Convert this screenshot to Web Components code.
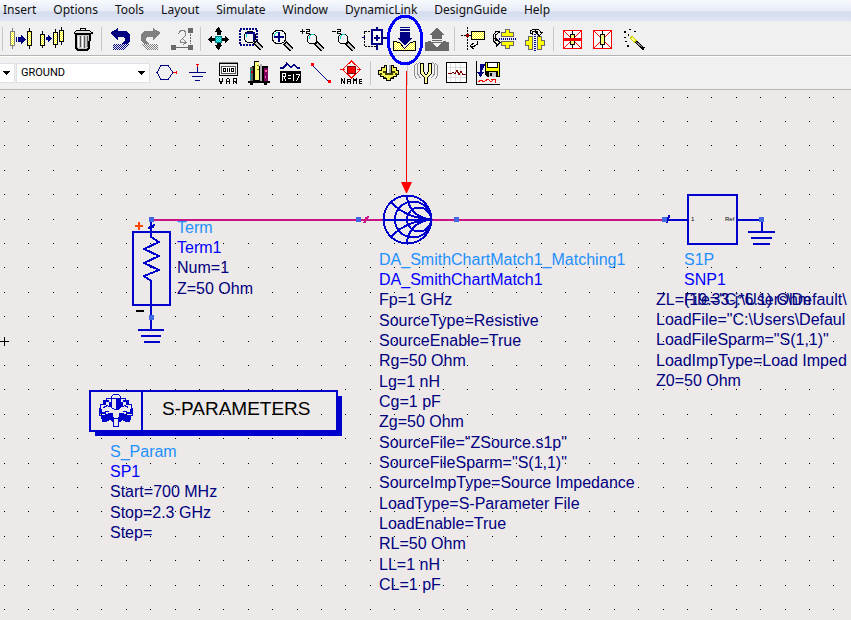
<!DOCTYPE html>
<html lang="en">
<head>
<meta charset="utf-8">
<title>Schematic</title>
<style>
  html, body { margin: 0; height: 100%; overflow: hidden; }
  body { font-family: "Noto Sans", "Open Sans", sans-serif; background: #ede9e8; }
</style>
</head>
<body>
<schematic-app>
  <menu-bar slot="menu">
    <menu-item>Insert</menu-item><menu-item>Options</menu-item><menu-item>Tools</menu-item><menu-item>Layout</menu-item><menu-item>Simulate</menu-item><menu-item>Window</menu-item><menu-item>DynamicLink</menu-item><menu-item>DesignGuide</menu-item><menu-item>Help</menu-item>
  </menu-bar>
  <tool-bar slot="tools">
    <tool-sep></tool-sep>
    <tool-button icon="insertSeries" label="Insert component"></tool-button>
    <tool-button icon="insertMany" label="Repeat component"></tool-button>
    <tool-button icon="trash" label="Delete"></tool-button>
    <tool-sep></tool-sep>
    <tool-button icon="undo" label="Undo"></tool-button>
    <tool-button icon="redo" label="Redo"></tool-button>
    <tool-button icon="endCommand" label="Edit path"></tool-button>
    <tool-sep></tool-sep>
    <tool-button icon="pan" label="View all"></tool-button>
    <tool-button icon="zoomArea" label="Zoom area"></tool-button>
    <tool-button icon="zoomPoint" label="Zoom point"></tool-button>
    <tool-button icon="zoomIn" label="Zoom in by 2"></tool-button>
    <tool-button icon="zoomOut" label="Zoom out by 2"></tool-button>
    <tool-button icon="moveCopy" label="Copy component"></tool-button>
    <tool-button icon="push" label="Push into hierarchy"></tool-button>
    <tool-button icon="pop" label="Pop out of hierarchy"></tool-button>
    <tool-sep></tool-sep>
    <tool-button icon="rotate" label="Rotate"></tool-button>
    <tool-button icon="mirrorX" label="Mirror about X"></tool-button>
    <tool-button icon="mirrorY" label="Mirror about Y"></tool-button>
    <tool-sep></tool-sep>
    <tool-button icon="deactivate" label="Deactivate"></tool-button>
    <tool-button icon="short" label="Deactivate and short"></tool-button>
    <tool-button icon="wand" label="Wizard"></tool-button>
  </tool-bar>
  <tool-bar slot="tools" second>
    <drop-down class="palette" label="Palette" value=""></drop-down>
    <drop-down class="part" label="Component" value="GROUND"></drop-down>
    <tool-button icon="port" label="Port"></tool-button>
    <tool-button icon="ground" label="Ground"></tool-button>
    <tool-button icon="variable" label="Variables"></tool-button>
    <tool-button icon="library" label="Library"></tool-button>
    <tool-button icon="values" label="Component values"></tool-button>
    <tool-button icon="wire" label="Wire"></tool-button>
    <tool-button icon="netName" label="Wire name"></tool-button>
    <tool-sep></tool-sep>
    <tool-button icon="simulate" label="Simulate"></tool-button>
    <tool-sep></tool-sep>
    <tool-button icon="tune" label="Tune"></tool-button>
    <tool-button icon="display" label="Data display"></tool-button>
    <tool-button icon="saveData" label="Save data"></tool-button>
  </tool-bar>
  <schematic-canvas slot="canvas">
    <part-text style="left:177px;top:128px"><span>Term</span><span>Term1</span><span>Num=1</span><span>Z=50 Ohm</span></part-text>
    <part-text style="left:379px;top:160px"><span>DA_SmithChartMatch1_Matching1</span><span>DA_SmithChartMatch1</span><span>Fp=1 GHz</span><span>SourceType=Resistive</span><span>SourceEnable=True</span><span>Rg=50 Ohm</span><span>Lg=1 nH</span><span>Cg=1 pF</span><span>Zg=50 Ohm</span><span>SourceFile="ZSource.s1p"</span><span>SourceFileSparm="S(1,1)"</span><span>SourceImpType=Source Impedance</span><span>LoadType=S-Parameter File</span><span>LoadEnable=True</span><span>RL=50 Ohm</span><span>LL=1 nH</span><span>CL=1 pF</span></part-text>
    <part-text style="left:684px;top:160px"><span>S1P</span><span>SNP1</span><span>File="C:\Users\Default\</span></part-text>
    <part-text plain style="left:656px;top:200px"><span>ZL=(19.33-j*6.1) Ohm</span><span>LoadFile="C:\Users\Defaul</span><span>LoadFileSparm="S(1,1)"</span><span>LoadImpType=Load Imped</span><span>Z0=50 Ohm</span></part-text>
    <sim-block style="left:89px;top:300px">S-PARAMETERS</sim-block>
    <part-text style="left:110px;top:352px"><span>S_Param</span><span>SP1</span><span>Start=700 MHz</span><span>Stop=2.3 GHz</span><span>Step=</span></part-text>
  </schematic-canvas>
</schematic-app>

<script>
const define = (name, html, init) => {
  const tpl = document.createElement('template');
  tpl.innerHTML = html;
  customElements.define(name, class extends HTMLElement {
    constructor() {
      super();
      this.attachShadow({ mode: 'open' }).append(tpl.content.cloneNode(true));
    }
    connectedCallback() { if (init) init(this, this.shadowRoot); }
  });
};

/* Glyphs share one sheet; each entry is [left edge, row, drawing]. */
const ROW = [24, 58];
const glass = (x, y, r) => `
  <path d="M${x + r - 1} ${y + r - 1}l7 7" stroke="#000" stroke-width="5"/>
  <path d="M${x + r} ${y + r}l6 6" stroke="#ccc" stroke-width="2"/>
  <circle cx="${x}" cy="${y}" r="${r}" fill="#f4f4f4" stroke="#000"/>
  <path d="M${x - r + 2} ${y}v-2l3-3h2" fill="none" stroke="#0dd"/>`;
const ICONS = {
  insertSeries: [6, 0, `
    <g stroke="#808080"><path d="M12.5 28v21"/><rect x="10.5" y="31.5" width="4" height="14" fill="url(#y)"/></g>
    <g stroke="#000"><path d="M29.5 28v21"/><rect x="27.5" y="31.5" width="4" height="14" fill="url(#y)"/></g>
    <path d="M16 37h1v5h-1zM18 37h3v-3l5 5.5-5 5.5v-3h-3z" fill="#000080"/>`],
  insertMany: [37, 0, `
    <g stroke="#000"><path d="M42.5 31v17M55.5 29v19M61.5 27v18"/><g fill="url(#y)"><rect x="40.5" y="34.5" width="4" height="11"/><rect x="53.5" y="32.5" width="4" height="12"/><rect x="59.5" y="30.5" width="4" height="11"/></g></g>
    <path d="M46 37h2v-3l4 4.5-4 4.5v-3h-2z" fill="#000080"/>`],
  trash: [68, 0, `
    <path d="M76 34h14l-1 14-2 2h-9l-2-2z" fill="#c8c8c8" stroke="#000" stroke-width="2"/>
    <path d="M78.5 36v11M82.5 36v12" stroke="#fff"/><path d="M80.5 36v11M84.5 36v12M87.5 36v11" stroke="#555"/>
    <path d="M74 32.5l3-2h12l3 2v1H74z" fill="#ddd" stroke="#000"/><path d="M80 29.5l1-1h4l1 1" fill="none" stroke="#000"/>`],
  undo: [105, 0, `
    <path d="M110 33l8-5v3h8l4 3v7l-3 3h-6l4-3v-3l-2-1h-5v3z" fill="#000080"/>
    <path d="M113 44h16l-2 4-4 2h-10z" fill="url(#n)"/>`],
  redo: [136, 0, `
    <path d="M161 33l-8-5v3h-8l-4 3v7l3 3h6l-4-3v-3l2-1h5v3z" fill="#808080"/>
    <path d="M158 44h-16l2 4 4 2h10z" fill="url(#g)"/>`],
  endCommand: [167, 0, `
    <g fill="#696969"><rect x="188" y="28" width="5" height="5"/><rect x="171" y="45" width="5" height="5"/><rect x="188" y="45" width="5" height="5"/><path d="M176 47h12v1h-12z"/></g>
    <path d="M190 34h1v2h-1zM190 37h1v2h-1zM190 40h1v2h-1zM190 43h1v1h-1z" fill="#696969"/>
    <path d="M178.500 34.500l1-3 2-1h3l1 2v3l-3 3-2 2v2h5M183.500 39.500l3 3-3 2" fill="none" stroke="#808080"/>`],
  pan: [204, 0, `
    <rect x="215" y="36" width="7" height="7" fill="#00b8b8"/><path d="M215 36h7v7h-7z" fill="url(#w)"/><rect x="215.5" y="36.5" width="6" height="6" fill="none" stroke="#008080"/>
    <path d="M218.5 27l4 5h-2v3h-4v-3h-2zM218.5 50l4-5h-2v-2h-4v2h-2zM208 39.5l4-4v2h3v3h-3v3zM229 39.5l-4-4v2h-3v3h3v3z"/>`],
  zoomArea: [235, 0, `
    <rect x="240" y="29" width="17" height="16" fill="none" stroke="#000080" stroke-width="2" stroke-dasharray="2 1"/>
    ${glass(250, 37, 6)}<path d="M246 33h8v8" fill="none" stroke="#000080" stroke-width="2"/>`],
  zoomPoint: [266, 0, `${glass(279, 37, 7)}<path d="M279 32v10M274 37h10" stroke="#000080" stroke-width="2"/>`],
  zoomIn: [297, 0, `${glass(312, 39, 5)}<path d="M300 31.5h5M302.5 29v5M306 29.5h3v2h-3v2h4" fill="none" stroke="#000"/>`],
  zoomOut: [328, 0, `${glass(343, 39, 5)}<path d="M332 31.5h4M337 29.5h3v2h-3v2h4" fill="none" stroke="#000"/>`],
  moveCopy: [359, 0, `
    <path d="M362 37.5h3" stroke="#000080"/><rect x="364.5" y="31.5" width="13" height="15" fill="none" stroke="#000" stroke-dasharray="2 1"/>
    <rect x="372" y="30" width="10" height="14" fill="#fff" stroke="#000080" stroke-width="2"/>
    <path d="M377 27v3M377 44v6M382 38h5M374 38h6M377 35v6" stroke="#000080" stroke-width="2"/>`],
  push: [390, 0, `
    <path d="M393.5 50.5v-9l6 1 5 6 6-6 5-1v9z" fill="url(#y)" stroke="#000"/>
    <path d="M400 27h10v1h-10zM400 29h10v2h-10zM400 32h10v6h3l-8 7-8-7h3z" fill="#000080"/>`],
  pop: [421, 0, `
    <path d="M425 51v-9l6-1 6 7 6-7 6 1v9z" fill="#696969"/>
    <path d="M437 28l8 7h-3v4h-10v-4h-3zM432 40h10v1h-10zM432 42h10v1h-10z" fill="#696969"/>`],
  rotate: [458, 0, `
    <path d="M467.5 27v24M461 35.5h6" stroke="#000" stroke-dasharray="2 1"/>
    <rect x="471.5" y="31.5" width="13" height="8" fill="url(#y)" stroke="#000"/><path d="M467 35.5h4" stroke="#000"/><rect x="466" y="34" width="3" height="3" fill="#a00000"/>
    <path d="M477.5 41v3l-3 2h-4M474 43l-4 3 4 3" fill="none" stroke="#000"/>`],
  mirrorX: [489, 0, `
    <path d="M499 39h17" stroke="#000080" stroke-width="2" stroke-dasharray="1 1"/>
    <path d="M505.5 29.5h4v3h4v4h-12v-4h4zM505.5 48.5h4v-3h4v-4h-12v4h4z" fill="#ffff00" stroke="#666"/>
    <path d="M499 31.5h-3l-3 4v5l3 3v3l4-4-4-4v2l-1-2 1-4 3-2z" fill="#eee" stroke="#000"/>`],
  mirrorY: [520, 0, `
    <path d="M535 34v17" stroke="#000080" stroke-width="2" stroke-dasharray="1 1"/>
    <path d="M525.5 40.5h3v-4h4v13h-4v-4h-3zM544.5 40.5h-3v-4h-4v13h4v-4h3z" fill="#ffff00" stroke="#666"/>
    <path d="M530.5 33v-2l3-2h5l2 3h2l-3 4-4-4h2l-2-1-3 1v2z" fill="#eee" stroke="#000"/>`],
  deactivate: [557, 0, `
    <rect x="563.5" y="30.5" width="18" height="18" fill="#fff" stroke="#f00"/><path d="M563 30l19 19M582 30l-19 19" stroke="#f00"/>
    <path d="M572.5 31v17" stroke="#000"/><rect x="570.5" y="34.5" width="4" height="10" fill="#ffff80" stroke="#000"/><path d="M563 39.5h19" stroke="#f00" stroke-width="3"/>`],
  short: [588, 0, `
    <rect x="593.5" y="30.5" width="18" height="18" fill="#fff" stroke="#f00"/><path d="M593 30l19 19M612 30l-19 19" stroke="#f00"/>
    <path d="M602.5 31v17" stroke="#000"/><rect x="600.5" y="34.5" width="4" height="10" fill="#ffff80" stroke="#000"/>`],
  wand: [619, 0, `
    <path d="M632 38l12 11" stroke="#000" stroke-width="3"/><path d="M636 42l6 5" stroke="#888"/><path d="M631 37l5 5" stroke="#cccc00" stroke-width="4"/><path d="M632 38l3 3" stroke="#ffff80" stroke-width="2"/>
    <path d="M624 31h2v2h-2zM629 29h2v1h-2zM634 31h2v1h-2zM624 37h2v1h-2zM628 34h1v2h-1zM627 45h2v2h-2zM625 41h2v1h-2z"/>`],
  port: [151, 1, `<path d="M157 72.5l4-7h7l5 7-5 7h-7z" fill="none" stroke="#000080"/><path d="M173 72.5h3" stroke="#f00"/><path d="M176 71h1v3h-1z" fill="#f00"/>`],
  ground: [182, 1, `<path d="M197.5 66v6M189 72.5h17M192 76.5h11M195 80.5h5" stroke="#000080"/><path d="M196 64h3v1h-1v2h-1v-2h-1z" fill="#f00"/>`],
  variable: [213, 1, `
    <rect x="219.5" y="63.5" width="18" height="12" fill="#eee" stroke="#000"/><path d="M219 62.5h19" stroke="#888"/><rect x="221.5" y="66.5" width="14" height="7" fill="#fff" stroke="#555"/>
    <path d="M223.5 68.5h2v3h-2zM227.5 68v4M229.5 68v4M231.5 68.5h2v3h-2z" fill="none" stroke="#000"/>
    <path d="M219.5 78v3l1 1v1h1v-1l1-1v-3M226.5 84v-4l1-2h1l1 2v4M226 81.5h4M233.5 84v-5.5h3v3h-3M235 81l2 3" fill="none" stroke="#000"/>`],
  library: [244, 1, `
    <path d="M248 81h22v2h-22zM250 83h3v2h-3zM264 83h3v2h-3zM252 66h16v15h-16z" fill="#000"/>
    <path d="M250 67h3v14h-3z" fill="#606060"/><path d="M250 69h1v11h-1z" fill="#00a0a0"/><path d="M251 71h2v2h-2z" fill="#c00000"/>
    <path d="M254 61h5v20h-5z" fill="#000"/><path d="M255 62h4v18h-4z" fill="#ffff80"/><path d="M257 65h2v1h-2zM257 69h2v1h-2z" fill="#808000"/>
    <path d="M260 64h2v17h-2z" fill="#b0b0b0"/><path d="M264 68h4v13h-4z" fill="#800060"/><path d="M265 70h2v2h-2zM265 76h1v2h-1z" fill="#ff60a0"/>`],
  values: [275, 1, `
    <path d="M280 67.5h4l3-4 4 4 3-3 3 3h3" fill="none" stroke="#000080" stroke-width="2"/><rect x="280" y="71" width="21" height="12"/>
    <path d="M282.5 81v-7.5h3v3h-3M284 77l2 4M288 75.5h3M288 78.5h3M293.5 74v7M295.5 74.5h4l-3 7" fill="none" stroke="#fff"/>`],
  wire: [306, 1, `<path d="M312 65l17 17" stroke="#000080"/><path d="M311 63h3v3h-3zM328 80h3v3h-3z" fill="#f00"/>`],
  netName: [337, 1, `
    <path d="M340 69.5h5M357 69.5h4M351.5 61l9 8.5-9 8.5-9-8.5z" fill="none" stroke="#f00"/><rect x="347" y="66" width="8" height="7" fill="#f00" stroke="#800000"/>
    <path d="M341.5 84v-5l3 4v-5M347.5 84v-4l1-1h1l1 1v4M347 81.5h4M353.5 84v-5l1.5 2 1.5-2v5M362 79.5h-2.5v4h2.5M360 81.5h2" fill="none" stroke="#000"/>`],
  simulate: [374, 1, `
    <path d="M381 67h3v-2h10v2h3v3h2v5h-2v2h-3v2h-3v2h-5v-2h-3v-2h-3v-2h-2v-5h3z" fill="#000"/>
    <path d="M382 68h3v-2h8v2h3v3h2v3h-2v2h-3v2h-3v2h-3v-2h-3v-2h-3v-2h-2v-3h3z" fill="#f0f050"/>
    <path d="M383 71h3v2h6v-2h3v2h-2v2h-8v-2h-2zM380 73h2v2h-2zM395 73h2v2h-2zM384 77h2v1h-2zM391 77h2v1h-2z" fill="#404000"/>
    <path d="M386 65h6v8h-6z" fill="#000"/><path d="M387 65h2v8h-2z" fill="#fff"/><path d="M389 65h2v8h-2z" fill="#a0a0a0"/>`],
  tune: [411, 1, `
    <path d="M416.5 63l-2 3v9l2 4M419.5 62l-2 3v9l3 4M435.500 63l2 3v9l-2 4M432.500 62l2 3v9l-3 4" fill="none" stroke="#909090"/>
    <path d="M420.5 63.5h3v8l2 3h1l2-3v-8h3v10l-4 4v6h-3v-6l-4-4z" fill="#ffffa0" stroke="#000"/>`],
  display: [442, 1, `
    <rect x="446.5" y="62.5" width="20" height="20" fill="#fff" stroke="#000"/><path d="M450.5 63v19M455.5 63v19M460.5 63v19M447 67.5h19M447 77.5h19" stroke="#ddd"/>
    <path d="M448 73.5h3l2-1 2 1 2-3 2 4 2-3 2 3h3" fill="none" stroke="#800000"/>`],
  saveData: [473, 1, `
    <path d="M476.5 61v23.500h23.500" fill="none" stroke="#000"/><path d="M485 64.5h-4.500v9M478 72.5l2.500 4 2.500-4z" fill="#000080" stroke="#000080"/>
    <path d="M485 62h15v15h-13l-2-2z"/><rect x="486" y="68" width="13" height="3" fill="#ffff00"/><path d="M486 63h1v6h-1zM498 63h1v13h-1z" fill="#ffff00"/><path d="M488 63h9v4h-9z" fill="#fff"/><path d="M489 72h7v5h-7z" fill="#ccc"/><path d="M490 73h2v3h-2z"/>
    <path d="M478 82l3-2 3 2 4-3 3 3 3-3M491 79.5h4v3" fill="none" stroke="#f00"/>`]
};
const checker = (id, a, b) => `<pattern id="${id}" width="2" height="2" patternUnits="userSpaceOnUse"><path d="M0 0h2v2H0z" fill="${b}"/><path d="M0 0h1v1H0zM1 1h1v1H1z" fill="${a}"/></pattern>`;
const PATTERNS = `<defs>${checker('y', '#ffff00', '#ffffff')}${checker('g', '#808080', 'none')}${checker('n', '#000080', 'none')}${checker('w', '#40ffff', 'none')}</defs>`;

define('schematic-app', `
  <style>
    :host { position: relative; display: flex; flex-direction: column; height: 100vh; overflow: hidden; }
    .canvas { flex: 1; display: flex; min-height: 0; }
    .note { position: absolute; left: 380px; top: 8px; pointer-events: none; }
  </style>
  <slot name="menu"></slot><slot name="tools"></slot>
  <div class="canvas"><slot name="canvas"></slot></div>
  <svg class="note" width="50" height="190" aria-hidden="true">
    <ellipse cx="25" cy="32" rx="17" ry="24" fill="none" stroke="#0000ff" stroke-width="3" shape-rendering="crispEdges"/>
    <path d="M26 63h1v112h-1zM21 174h11l-5 11h-1z" fill="#ff0000"/>
  </svg>`);

define('menu-bar', `
  <style>
    :host { display: flex; gap: 17px; height: 22px; padding-left: 3px; box-sizing: border-box; white-space: nowrap;
      background: linear-gradient(#f8fafd 0, #e6ebf6 11px, #d5dcef 12px, #dce3f4 20px, #f0f0f0 22px); }
  </style><slot></slot>`);

define('menu-item', `
  <style>
    :host { display: block; }
    button { all: unset; display: block; font-size: 12px; line-height: 20px; color: #111; }
  </style><button type="button"><slot></slot></button>`);

define('tool-bar', `
  <style>
    :host { display: flex; flex: none; background: #f0f0f0; padding: 2px 0 1px; border-bottom: 1px solid #b4b4b4; }
    :host([second]) { padding: 1px 0; border-top: 1px solid #fff; }
  </style><slot></slot>`);

define('tool-sep', `
  <style>
    :host { display: block; flex: none; width: 6px; }
    i { display: block; width: 1px; height: 24px; margin: 3px 2px; background: #c8c8c8; }
  </style><i></i>`);

define('tool-button', `
  <style>
    :host { display: block; flex: none; }
    button { all: unset; display: block; width: 31px; height: 30px; }
    svg { display: block; overflow: visible; }
  </style><button type="button"></button>`, (host, root) => {
    const [x, row, art] = ICONS[host.getAttribute('icon')];
    const b = root.querySelector('button');
    b.setAttribute('aria-label', host.getAttribute('label'));
    b.innerHTML = `<svg width="31" height="30" viewBox="${x} ${ROW[row]} 31 30" shape-rendering="crispEdges" aria-hidden="true">${PATTERNS}${art}</svg>`;
  });

define('drop-down', `
  <style>
    :host { display: grid; flex: none; height: 20px; margin-top: 5px; margin-right: 1px; background: #fff; border: 1px solid #dde1e8; box-sizing: border-box; align-items: center; }
    :host(.palette) { width: 15px; border-left: 0; }
    :host(.part) { width: 134px; }
    select { all: unset; width: 100%; padding-left: 4px; box-sizing: border-box; font: 11px/18px Roboto, sans-serif; color: #000; }
    :host(.palette) select { padding: 0; }
    select, svg { grid-area: 1 / 1; }
    svg { justify-self: end; margin-right: 4px; pointer-events: none; }
  </style>
  <select><option></option></select>
  <svg width="7" height="4" shape-rendering="crispEdges" aria-hidden="true"><path d="M0 0h7v1H0zM1 1h5v1H1zM2 2h3v1H2zM3 3h1v1H3z"/></svg>`, (host, root) => {
    root.querySelector('select').setAttribute('aria-label', host.getAttribute('label'));
    root.querySelector('option').textContent = host.getAttribute('value');
  });

define('part-text', `
  <style>
    :host { position: absolute; display: flex; flex-direction: column; font: 16px/20px "Liberation Sans", Arial, sans-serif; color: #000080; white-space: nowrap; }
    ::slotted(:nth-child(3n)) { margin-bottom: 1px; }
    :host(:not([plain])) ::slotted(:nth-child(1)) { color: #1e90ff; }
    :host(:not([plain])) ::slotted(:nth-child(2)) { color: #0000ff; }
  </style><slot></slot>`);

define('sim-block', `
  <style>
    :host { position: absolute; display: flex; box-sizing: border-box; width: 249px; height: 42px; border: 2px solid #0000cd; color: #000;
      font: 19px/34px "Liberation Sans", Arial, sans-serif; }
    :host::before { content: ""; position: absolute; left: 4px; right: -6px; top: 4px; bottom: -6px; border: solid #0000cd; border-width: 0 4px 4px 0; }
    svg { flex: none; border-right: 2px solid #0000cd; }
    span { flex: 1; padding-left: 19px; }
  </style>
  <svg width="50" height="38" shape-rendering="crispEdges" aria-hidden="true">
    <g fill="none" stroke="#0000cd">
      <path d="M20.5 6.5h-5v2h-3v4h-3v4h-1v7h2v3h3l3-3h5l1 3h5l1-3h5l3 3h3v-3h2v-7h-1v-4h-3v-4h-3v-2h-5"/>
      <path d="M20.500 4.500l2-2h5l2 2v11l-2 2h-4l-3-2zM20 6.500h9M22.500 26v8h5v-8"/>
      <path d="M12.500 15.500l4-2 2 2M37.500 15.500l-4-2-2 2M14 19.500h4M32 19.500h4"/>
    </g>
    <path d="M25 7h4v9l-2 2h-2zM13 8h5v2h-3v3h-3v-3h1zM32 8h5v2h1v3h-3v-3h-3zM8 17h3v3h4v2H9zM42 17h-3v3h-4v2h6zM18 10h2v5h-2zM30 10h2v5h-2zM10 23h3l5-2h4v9h-1l-2-2-4 2h-4v-2l-1-1zM40 23h-3l-5-2h-4v9h1l2-2 4 2h4v-2l1-1z" fill="#0000cd"/>
  </svg>
  <span><slot></slot></span>`);

define('schematic-canvas', `
  <style>
    :host { position: relative; display: block; flex: 1; overflow: hidden; background: #ede9e8; }
    svg { position: absolute; left: 0; top: 0; width: 100%; height: 100%; }
    text { font: 6px "Liberation Sans", Arial, sans-serif; fill: #000; }
  </style>
  <slot></slot>
  <svg shape-rendering="crispEdges">
    <defs>
      <pattern id="dots" x="4" y="7" width="122" height="122" patternUnits="userSpaceOnUse"></pattern>
      <clipPath id="disc"><circle cx="407" cy="129" r="24"/></clipPath>
    </defs>
    <rect width="100%" height="100%" fill="url(#dots)"/>
    <path d="M152 130H383M432 130H664" stroke="#c71585" stroke-width="2"/>
    <path d="M364 133l2-3h2M366 130v-3M368 126l-1 4" stroke="#c71585" stroke-width="2" fill="none"/>
    <g fill="none" stroke="#0000cd" stroke-width="2">
      <rect x="133" y="142" width="37" height="73"/>
      <path d="M151 130v17l8 5-15 7 15 7-15 7 15 7-15 6 7 5v49M138 240h26M141 246h20M144 252h16M148 138l3-1h2l1-3"/>
      <rect x="688" y="105" width="49" height="49"/>
      <path d="M667 130h20M738 130h24M762 130v12M748 142h27M751 148h21M753 154h17M667 133v-3l2-3v-2"/>
      <circle cx="407.500" cy="129.500" r="24"/>
      <g clip-path="url(#disc)">
        <path d="M383 130h48"/>
        <circle cx="413" cy="129.500" r="18"/><circle cx="419" cy="129.500" r="12"/>
        <circle cx="431" cy="105" r="24"/><circle cx="431" cy="154" r="24"/>
        <circle cx="431" cy="73" r="56"/><circle cx="431" cy="186" r="56"/>
      </g>
    </g>
    <path d="M149 127h5v5h-5zM149 225h5v5h-5zM356 127h5v5h-5zM454 127h5v5h-5zM662 127h5v5h-5zM759 127h5v5h-5z" fill="#4169e1"/>
    <path d="M135 136h8M139 132v8" stroke="#ff4500" stroke-width="2"/>
    <path d="M136 221h8" stroke="#000" stroke-width="2"/>
    <path d="M0 251h9v1H0zM4 247h1v9H4z"/>
    <text x="691" y="131">1</text><text x="725" y="131">Ref</text>
  </svg>`, (host, root) => {
    const xs = [0, 24, 49, 73, 97], ys = [0, 24, 48, 73, 97];
    root.querySelector('#dots').innerHTML = `<path d="${ys.map(y => xs.map(x => `M${x} ${y}h1v1h-1z`).join('')).join('')}"/>`;
  });
</script>
</body>
</html>
